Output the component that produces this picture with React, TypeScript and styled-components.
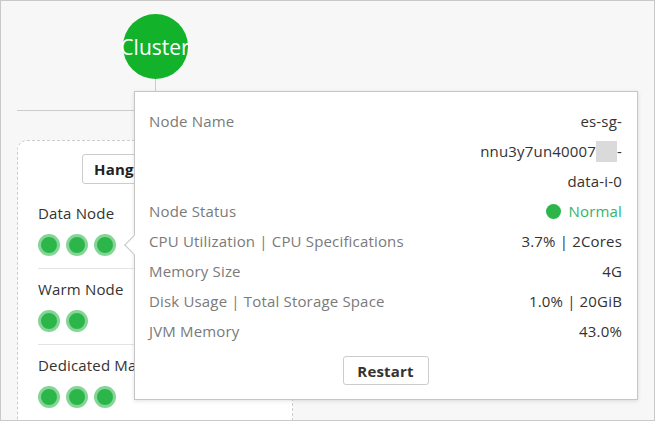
import React from "react";
import styled, { createGlobalStyle } from "styled-components";

const Global = createGlobalStyle`
  html, body { margin: 0; padding: 0; background: #ffffff; }
  body { font-family: "Open Sans", "Noto Sans", "Liberation Sans", sans-serif; }
  * { box-sizing: border-box; }
`;

const Page = styled.div`
  position: relative;
  width: 655px;
  height: 421px;
  border: 1px solid #c9c9c9;
  background: #f7f7f7;
  overflow: hidden;
  padding: 13px 0 0 16px;
  font-size: 15px;
  letter-spacing: 0.17px;
`;

const Tree = styled.div`
  width: 276px;
  display: flex;
  flex-direction: column;
  align-items: center;
`;

const ClusterNode = styled.div`
  width: 65px;
  height: 65px;
  border-radius: 50%;
  background: #13b22b;
  color: #ffffff;
  font-size: 21px;
  letter-spacing: 0;
  display: flex;
  align-items: center;
  justify-content: center;
  white-space: nowrap;
`;

const Connector = styled.div`
  width: 1px;
  height: 31px;
  background: #cccccc;
`;

const HLine = styled.div`
  align-self: flex-start;
  width: 600px;
  height: 1px;
  background: #cccccc;
`;

const ZoneCard = styled.div`
  align-self: stretch;
  margin-top: 29px;
  height: 320px;
  background: #ffffff;
  border: 1px dashed #cccccc;
  border-radius: 10px;
  padding: 13px 20px 0 20px;
  display: flex;
  flex-direction: column;
`;

const ZoneButton = styled.div`
  align-self: center;
  width: 146px;
  height: 30px;
  border: 1px solid #cccccc;
  border-radius: 3px;
  background: #ffffff;
  font-weight: 700;
  color: #222;
  font-size: 15px;
  line-height: 28px;
  padding-left: 11px;
  white-space: nowrap;
  overflow: hidden;
`;

const Section = styled.div<{ $first?: boolean }>`
  padding: 10px 0 12px 0;
  margin-top: ${(p) => (p.$first ? "9px" : "0")};
  border-bottom: 1px solid #e3e3e3;
  &:last-child { border-bottom: none; }
`;

const SectionLabel = styled.div`
  line-height: 20px;
  color: #333;
  white-space: nowrap;
`;

const Dots = styled.div`
  margin-top: 11px;
  display: flex;
  gap: 6px;
`;

const NodeDot = styled.span`
  width: 22px;
  height: 22px;
  border-radius: 50%;
  background: #2cb64a;
  border: 3px solid #84d596;
`;

const Popup = styled.div`
  position: absolute;
  left: 133px;
  top: 90px;
  width: 504px;
  height: 309px;
  background: #ffffff;
  border: 1px solid #c6c6c6;
  box-shadow: 0 1px 4px rgba(0, 0, 0, 0.12);
  padding: 14px 15px 0 14px;
  display: flex;
  flex-direction: column;
`;

const Arrow = styled.span`
  position: absolute;
  left: -8px;
  top: 146px;
  width: 14px;
  height: 14px;
  background: #ffffff;
  border-left: 1px solid #c6c6c6;
  border-bottom: 1px solid #c6c6c6;
  transform: rotate(45deg);
`;

const Row = styled.div`
  display: flex;
  justify-content: space-between;
  align-items: flex-start;
  line-height: 30px;
`;

const Label = styled.span`
  color: #7a7a7a;
  white-space: nowrap;
`;

const Value = styled.span<{ $tone?: "ok" }>`
  color: ${(p) => (p.$tone === "ok" ? "#33b36c" : "#333333")};
  text-align: right;
  white-space: nowrap;
  display: flex;
  flex-direction: column;
  align-items: flex-end;
`;

const StatusLine = styled.span`
  display: flex;
  align-items: center;
  gap: 8px;
`;

const StatusDot = styled.span`
  width: 15px;
  height: 15px;
  border-radius: 50%;
  background: #2cb64a;
`;

const Masked = styled.span`
  display: inline-block;
  width: 21px;
  height: 21px;
  vertical-align: -5px;
  background: #dadada;
`;

const Actions = styled.div`
  margin-top: 10px;
  display: flex;
  justify-content: center;
`;

const RestartButton = styled.button`
  width: 86px;
  height: 29px;
  border: 1px solid #cccccc;
  border-radius: 3px;
  background: #ffffff;
  font-family: inherit;
  font-size: 15px;
  font-weight: 700;
  letter-spacing: 0.17px;
  color: #333;
  padding: 0;
  cursor: pointer;
`;

const sections = [
  { name: "Data Node", count: 3 },
  { name: "Warm Node", count: 2 },
  { name: "Dedicated Master Node", count: 3 },
];

const details: { label: string; value: string }[] = [
  { label: "CPU Utilization | CPU Specifications", value: "3.7% | 2Cores" },
  { label: "Memory Size", value: "4G" },
  { label: "Disk Usage | Total Storage Space", value: "1.0% | 20GiB" },
  { label: "JVM Memory", value: "43.0%" },
];

export default function App() {
  return (
    <>
      <Global />
      <Page>
        <Tree>
          <ClusterNode>Cluster</ClusterNode>
          <Connector />
          <HLine />
          <ZoneCard>
            <ZoneButton>Hangzhou Zone I</ZoneButton>
            {sections.map((s, i) => (
              <Section key={s.name} $first={i === 0}>
                <SectionLabel>{s.name}</SectionLabel>
                <Dots>
                  {Array.from({ length: s.count }).map((_, k) => (
                    <NodeDot key={k} />
                  ))}
                </Dots>
              </Section>
            ))}
          </ZoneCard>
        </Tree>
        <Popup>
          <Arrow />
          <Row>
            <Label>Node Name</Label>
            <Value>
              <span>es-sg-</span>
              <span>
                nnu3y7un40007<Masked />-
              </span>
              <span>data-i-0</span>
            </Value>
          </Row>
          <Row>
            <Label>Node Status</Label>
            <Value $tone="ok">
              <StatusLine>
                <StatusDot />
                Normal
              </StatusLine>
            </Value>
          </Row>
          {details.map((d) => (
            <Row key={d.label}>
              <Label>{d.label}</Label>
              <Value>{d.value}</Value>
            </Row>
          ))}
          <Actions>
            <RestartButton>Restart</RestartButton>
          </Actions>
        </Popup>
      </Page>
    </>
  );
}
